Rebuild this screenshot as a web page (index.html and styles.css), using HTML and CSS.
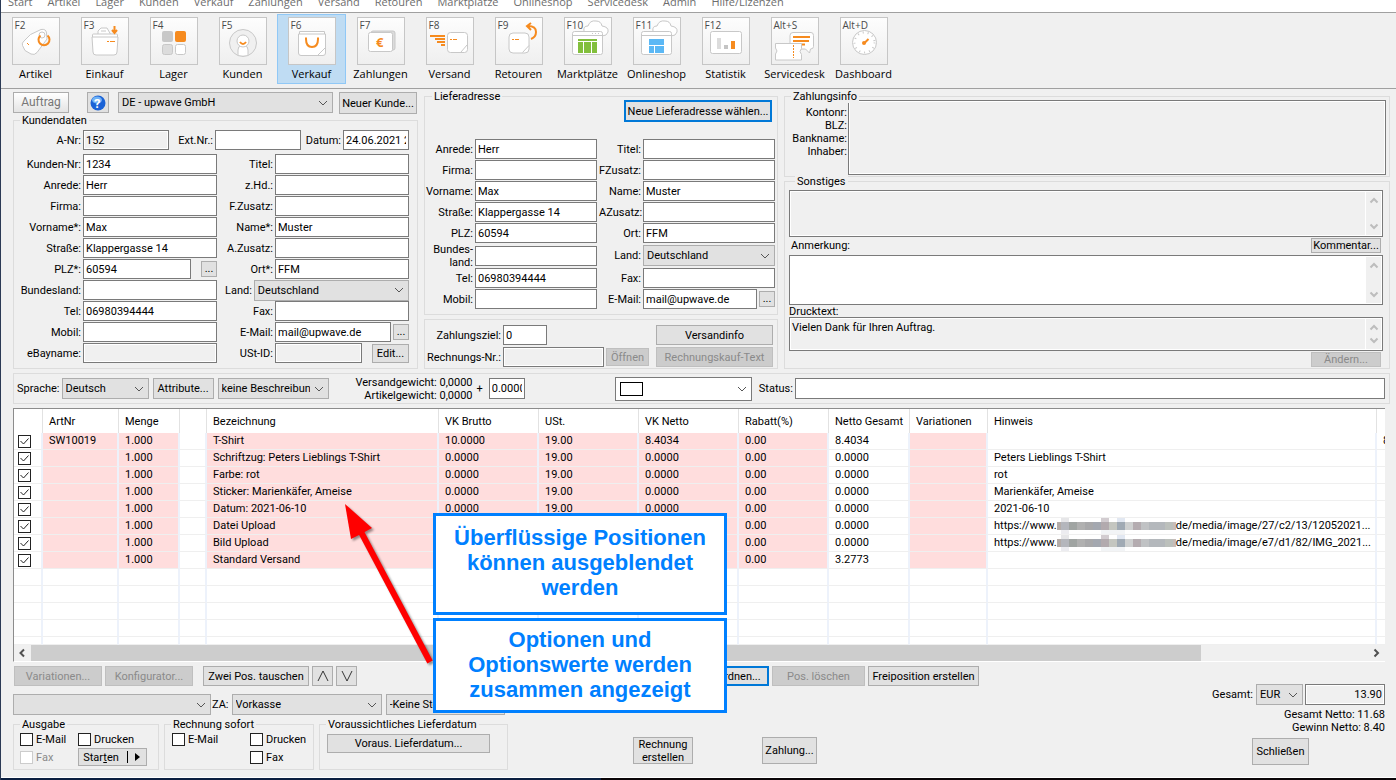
FILE: index.html
```html
<!DOCTYPE html>
<html lang="de">
<head>
    <meta charset="UTF-8">
    <meta name="viewport" content="width=device-width, initial-scale=1.0">
    <title>Auftrag</title>
    <link rel="stylesheet" href="styles.css">
</head>
<body>
    <!-- Menu -->
    <nav class="menu">
        <a href="#">Start</a>
        <a href="#">Artikel</a>
        <a href="#">Lager</a>
        <a href="#">Kunden</a>
        <a href="#">Verkauf</a>
        <a href="#">Zahlungen</a>
        <a href="#">Versand</a>
        <a href="#">Retouren</a>
        <a href="#">Marktplätze</a>
        <a href="#">Onlineshop</a>
        <a href="#">Servicedesk</a>
        <a href="#">Admin</a>
        <a href="#">Hilfe/Lizenzen</a>
    </nav>

    <!-- Toolbar -->
    <div class="toolbar">
        <button type="button" class="tool">
            <span class="tool-icon"><kbd>F2</kbd>
                <svg viewBox="0 0 48 48"><path class="line" d="M10.500 28.500Q9.500 26 12 24L18.500 17.500 29 12.500Q34 11.500 34.500 16L35 22 25 35.500Q22.500 38.500 19 37L13 33.500Z"/><circle class="line" cx="30" cy="18" r="3"/><path class="orange-line" stroke-width="2" d="M28.500 18.500A5.500 5.500 0 1 0 35.500 18.500"/><path class="orange-line" d="M15 26l2 2"/></svg>
            </span>
            Artikel
        </button>
        <button type="button" class="tool">
            <span class="tool-icon"><kbd>F3</kbd>
                <svg viewBox="0 0 48 48"><path class="line" d="M17 18V14l3-3h6l4 7M20 14h5"/><path class="line" d="M11.500 20V18q0-1 1-1h23q1 0 1 1v2"/><path class="line" d="M11 20h26l-1 15q0 3-3 3H15q-3 0-3-3Z"/><path class="orange-line" stroke-width="2" d="M33.500 9v6M31 13l2.500 3 2.500-3"/><path class="orange-line" d="M26 24.500h2M29 24.500h5"/></svg>
            </span>
            Einkauf
        </button>
        <button type="button" class="tool">
            <span class="tool-icon"><kbd>F4</kbd>
                <svg viewBox="0 0 48 48"><rect x="12" y="14" width="11" height="11" rx="2" fill="#c8c8c8"/><rect x="25" y="14" width="11" height="11" rx="2" fill="#f68b1f"/><rect class="line gray" x="12.500" y="27.500" width="10" height="10" rx="2"/><rect class="line" x="25.500" y="27.500" width="10" height="10" rx="2"/></svg>
            </span>
            Lager
        </button>
        <button type="button" class="tool">
            <span class="tool-icon"><kbd>F5</kbd>
                <svg viewBox="0 0 48 48"><circle class="line light" cx="24" cy="26" r="13.500"/><path class="line" d="M19 38v-5q0-4 3-4h4q3 0 3 4v5"/><circle class="line" cx="24" cy="24" r="6"/><path class="orange-line" stroke-width="2" d="M21 25q3 4 6 0"/></svg>
            </span>
            Kunden
        </button>
        <button type="button" class="tool active">
            <span class="tool-icon"><kbd>F6</kbd>
                <svg viewBox="0 0 48 48"><path class="line" d="M11.500 17v-2.500h25V17"/><path class="line" d="M10.500 17h27v19q0 2.500-2.500 2.500H13q-2.500 0-2.500-2.500Z"/><path class="line" d="M29.500 38.500l8-8"/><path class="orange-line" stroke-width="2" d="M17 21.500h2M29 21.500h2M18 22q0 8 6 8t6-8"/></svg>
            </span>
            Verkauf
        </button>
        <button type="button" class="tool">
            <span class="tool-icon"><kbd>F7</kbd>
                <svg viewBox="0 0 48 48"><rect class="line gray" x="14" y="14" width="24" height="19" rx="2"/><rect class="line" x="11.500" y="15.500" width="24" height="19" rx="2"/><text x="19" y="30" class="euro">€</text></svg>
            </span>
            Zahlungen
        </button>
        <button type="button" class="tool">
            <span class="tool-icon"><kbd>F8</kbd>
                <svg viewBox="0 0 48 48"><rect class="line" x="21.500" y="15.500" width="20" height="20" rx="3"/><path class="line" d="M35 35l6-7"/><path class="orange-line" stroke-width="2" d="M4 19h15M9 22h10M11 25h8M15 28h4"/><path class="orange-line" d="M24 22.500h2M27 22.500h4"/></svg>
            </span>
            Versand
        </button>
        <button type="button" class="tool">
            <span class="tool-icon"><kbd>F9</kbd>
                <svg viewBox="0 0 48 48"><rect class="line" x="14" y="16" width="20" height="20" rx="4"/><path class="line" d="M27.500 35.500l6.500-7"/><path class="orange-line" stroke-width="2" d="M36 22q5-2 5-7 0-6-8-6M36 6l-4 3 4 4"/><path class="orange-line" d="M17 22.500h2M20 22.500h4"/></svg>
            </span>
            Retouren
        </button>
        <button type="button" class="tool">
            <span class="tool-icon"><kbd>F10</kbd>
                <svg viewBox="0 0 48 48"><path class="line" d="M20 14q-1-5 4-5 2-6 8-5 5 0 6 5 7 1 6 6-1 4-6 4"/><rect class="line" x="8.500" y="14.500" width="30" height="23" rx="2"/><path class="line" d="M9 18.500h29M28 16.500h1M31 16.500h1M34 16.500h1"/><rect x="14" y="22" width="19" height="14" fill="#82bf3c"/><path stroke="#fff" fill="none" d="M14 24.500h19M19.500 25v11M27.500 25v11"/></svg>
            </span>
            Marktplätze
        </button>
        <button type="button" class="tool">
            <span class="tool-icon"><kbd>F11</kbd>
                <svg viewBox="0 0 48 48"><path class="line" d="M20 14q-1-5 4-5 2-6 8-5 5 0 6 5 7 1 6 6-1 4-6 4"/><rect class="line" x="8.500" y="14.500" width="30" height="23" rx="2"/><path class="line" d="M9 18.500h29"/><rect x="16" y="22" width="15" height="14" fill="#5bb8f5"/><path stroke="#fff" fill="none" d="M16 28.500h15M21.500 29v7"/></svg>
            </span>
            Onlineshop
        </button>
        <button type="button" class="tool">
            <span class="tool-icon"><kbd>F12</kbd>
                <svg viewBox="0 0 48 48"><rect class="line" x="8.500" y="14.500" width="31" height="22" rx="2"/><rect x="15" y="21" width="4" height="11" fill="#dcdcdc"/><rect x="22" y="28" width="4" height="4" fill="#c4c4c4"/><rect x="29" y="24" width="4" height="8" fill="#f68b1f"/></svg>
            </span>
            Statistik
        </button>
        <button type="button" class="tool">
            <span class="tool-icon"><kbd>Alt+S</kbd>
                <svg viewBox="0 0 48 48"><path class="line" d="M22 15.500h18q2.500 0 2.500 3v11q0 2.500-3 2.500l-1 4-4-4H22q-3 0-3-2.500v-11q0-3 3-3Z"/><path class="orange-line" stroke-width="2" d="M22 20h17M22 24h16M28 27.500h6"/><path class="line" d="M4.500 26.500h26v5q-3 3 0 6v5.500h-26V37q3-3 0-6Z"/><path class="orange-line" stroke-dasharray="2 1" d="M22.500 28v13"/></svg>
            </span>
            Servicedesk
        </button>
        <button type="button" class="tool">
            <span class="tool-icon"><kbd>Alt+D</kbd>
                <svg viewBox="0 0 48 48"><circle class="line" cx="24.500" cy="25.500" r="12"/><circle cx="24.500" cy="25.500" r="10" fill="none" stroke="#c8c8c8" stroke-width="2" stroke-dasharray="1 4"/><path class="orange-line" stroke-width="2" d="M24.500 26l4-4"/><circle cx="24" cy="26" r="2" fill="#f68b1f"/></svg>
            </span>
            Dashboard
        </button>
    </div>

    <main class="order">
        <div class="top">
            <!-- Customer -->
            <div class="col-customer">
                <div class="head-row">
                    <button type="button" class="btn order-btn">Auftrag</button>
                    <button type="button" class="btn help-btn" aria-label="Hilfe">
                        <svg viewBox="0 0 16 16" width="16" height="16"><circle cx="8" cy="8" r="7.500" fill="#1a62d6"/><ellipse cx="7" cy="5" rx="5" ry="3.500" fill="#6fb2f7"/><text x="4" y="13" class="help-mark">?</text></svg>
                    </button>
                    <select class="select company" aria-label="Firma"><option>DE - upwave GmbH</option></select>
                    <button type="button" class="btn new-customer">Neuer Kunde...</button>
                </div>
                <fieldset class="group customer">
                    <legend>Kundendaten</legend>
                    <div class="number-row">
                        <label for="anr">A-Nr:</label>
                        <input type="text" id="anr" value="152" readonly>
                        <label for="extnr">Ext.Nr.:</label>
                        <input type="text" id="extnr">
                        <label for="datum">Datum:</label>
                        <input type="text" id="datum" value="24.06.2021 22:10">
                    </div>
                    <div class="fields">
                        <label for="kdnr">Kunden-Nr:</label>
                        <input type="text" id="kdnr" value="1234">
                        <label for="titel">Titel:</label>
                        <input type="text" id="titel">

                        <label for="anrede">Anrede:</label>
                        <input type="text" id="anrede" value="Herr">
                        <label for="zhd">z.Hd.:</label>
                        <input type="text" id="zhd">

                        <label for="firma">Firma:</label>
                        <input type="text" id="firma">
                        <label for="fzusatz">F.Zusatz:</label>
                        <input type="text" id="fzusatz">

                        <label for="vorname">Vorname*:</label>
                        <input type="text" id="vorname" value="Max">
                        <label for="name">Name*:</label>
                        <input type="text" id="name" value="Muster">

                        <label for="strasse">Straße:</label>
                        <input type="text" id="strasse" value="Klappergasse 14">
                        <label for="azusatz">A.Zusatz:</label>
                        <input type="text" id="azusatz">

                        <label for="plz">PLZ*:</label>
                        <div class="with-btn wide-gap">
                            <input type="text" id="plz" value="60594">
                            <button type="button" class="btn dots">...</button>
                        </div>
                        <label for="ort">Ort*:</label>
                        <input type="text" id="ort" value="FFM">

                        <label for="bundesland">Bundesland:</label>
                        <input type="text" id="bundesland">
                        <div class="country">
                            <label for="land">Land:</label>
                            <select class="select" id="land"><option>Deutschland</option></select>
                        </div>

                        <label for="tel">Tel:</label>
                        <input type="text" id="tel" value="06980394444">
                        <label for="fax">Fax:</label>
                        <input type="text" id="fax">

                        <label for="mobil">Mobil:</label>
                        <input type="text" id="mobil">
                        <label for="email">E-Mail:</label>
                        <div class="with-btn">
                            <input type="text" id="email" value="mail@upwave.de">
                            <button type="button" class="btn dots">...</button>
                        </div>

                        <label for="ebay">eBayname:</label>
                        <input type="text" id="ebay" readonly>
                        <label for="ustid">USt-ID:</label>
                        <div class="with-btn wide-gap">
                            <input type="text" id="ustid" readonly>
                            <button type="button" class="btn edit-btn">Edit...</button>
                        </div>
                    </div>
                </fieldset>
            </div>

            <!-- Delivery address -->
            <div class="col-delivery">
                <fieldset class="group delivery">
                    <legend>Lieferadresse</legend>
                    <div class="group-body">
                        <button type="button" class="btn focus new-address">Neue Lieferadresse wählen...</button>
                        <div class="fields">
                            <label for="l-anrede">Anrede:</label>
                            <input type="text" id="l-anrede" value="Herr">
                            <label for="l-titel">Titel:</label>
                            <input type="text" id="l-titel">

                            <label for="l-firma">Firma:</label>
                            <input type="text" id="l-firma">
                            <label for="l-fzusatz">FZusatz:</label>
                            <input type="text" id="l-fzusatz">

                            <label for="l-vorname">Vorname:</label>
                            <input type="text" id="l-vorname" value="Max">
                            <label for="l-name">Name:</label>
                            <input type="text" id="l-name" value="Muster">

                            <label for="l-strasse">Straße:</label>
                            <input type="text" id="l-strasse" value="Klappergasse 14">
                            <label for="l-azusatz">AZusatz:</label>
                            <input type="text" id="l-azusatz">

                            <label for="l-plz">PLZ:</label>
                            <input type="text" id="l-plz" value="60594">
                            <label for="l-ort">Ort:</label>
                            <input type="text" id="l-ort" value="FFM">

                            <label for="l-bundesland">Bundes-<br>land:</label>
                            <input type="text" id="l-bundesland">
                            <label for="l-land">Land:</label>
                            <select class="select" id="l-land"><option>Deutschland</option></select>

                            <label for="l-tel">Tel:</label>
                            <input type="text" id="l-tel" value="06980394444">
                            <label for="l-fax">Fax:</label>
                            <input type="text" id="l-fax">

                            <label for="l-mobil">Mobil:</label>
                            <input type="text" id="l-mobil">
                            <label for="l-email">E-Mail:</label>
                            <div class="with-btn">
                                <input type="text" id="l-email" value="mail@upwave.de">
                                <button type="button" class="btn dots">...</button>
                            </div>
                        </div>
                    </div>
                </fieldset>
                <div class="payment-box">
                    <label for="ziel">Zahlungsziel:</label>
                    <div><input type="text" id="ziel" class="ziel" value="0"></div>
                    <button type="button" class="btn">Versandinfo</button>
                    <label for="rnr">Rechnungs-Nr.:</label>
                    <div class="with-btn">
                        <input type="text" id="rnr" readonly>
                        <button type="button" class="btn open-btn" disabled>Öffnen</button>
                    </div>
                    <button type="button" class="btn" disabled>Rechnungskauf-Text</button>
                </div>
            </div>

            <!-- Payment info and notes -->
            <div class="col-notes">
                <fieldset class="group">
                    <legend>Zahlungsinfo</legend>
                    <div class="group-body payinfo">
                        <label for="payinfo">Kontonr:<br>BLZ:<br>Bankname:<br>Inhaber:</label>
                        <textarea id="payinfo" class="area" readonly></textarea>
                    </div>
                </fieldset>
                <fieldset class="group notes">
                    <legend>Sonstiges</legend>
                    <div class="memo readonly">
                        <textarea aria-label="Sonstiges" rows="2" readonly></textarea>
                        <div class="scroll">
                            <svg viewBox="0 0 10 7"><path d="M1.500 5.500L5 2l3.500 3.500"/></svg>
                            <svg viewBox="0 0 10 7"><path d="M1.500 1.500L5 5l3.500-3.500"/></svg>
                        </div>
                    </div>
                    <div class="note-row">
                        <label for="anmerkung">Anmerkung:</label>
                        <button type="button" class="btn small">Kommentar...</button>
                    </div>
                    <div class="memo">
                        <textarea id="anmerkung" rows="3"></textarea>
                        <div class="scroll">
                            <svg viewBox="0 0 10 7"><path d="M1.500 5.500L5 2l3.500 3.500"/></svg>
                            <svg viewBox="0 0 10 7"><path d="M1.500 1.500L5 5l3.500-3.500"/></svg>
                        </div>
                    </div>
                    <label for="drucktext" class="print-label">Drucktext:</label>
                    <div class="memo readonly short">
                        <textarea id="drucktext" rows="2" readonly>Vielen Dank für Ihren Auftrag.</textarea>
                        <div class="scroll">
                            <svg viewBox="0 0 10 7"><path d="M1.500 5.500L5 2l3.500 3.500"/></svg>
                            <svg viewBox="0 0 10 7"><path d="M1.500 1.500L5 5l3.500-3.500"/></svg>
                        </div>
                    </div>
                    <div class="note-row end">
                        <button type="button" class="btn small" disabled>Ändern...</button>
                    </div>
                </fieldset>
            </div>
        </div>

        <!-- Language, weight, status -->
        <div class="strip">
            <label for="sprache">Sprache:</label>
            <select class="select language" id="sprache"><option>Deutsch</option></select>
            <button type="button" class="btn attributes">Attribute...</button>
            <select class="select description" aria-label="Beschreibung"><option>keine Beschreibun</option></select>
            <label for="gewicht" class="weights">Versandgewicht: 0,0000<br>Artikelgewicht: 0,0000</label>
            <span class="plus">+</span>
            <input type="text" id="gewicht" class="weight" value="0.0000">
            <div class="color-pick">
                <select class="select" id="farbe" aria-label="Farbe"><option></option></select>
                <span class="swatch"></span>
            </div>
            <label for="status">Status:</label>
            <input type="text" id="status" class="status">
        </div>

        <!-- Positions -->
        <div class="positions">
            <table>
                <colgroup>
                    <col class="c-check"><col class="c-nr"><col class="c-amount"><col class="c-empty"><col class="c-name">
                    <col class="c-price"><col class="c-price"><col class="c-price"><col class="c-discount"><col class="c-total">
                    <col class="c-var"><col><col class="c-last">
                </colgroup>
                <thead>
                    <tr><th></th><th>ArtNr</th><th>Menge</th><th></th><th>Bezeichnung</th><th>VK Brutto</th><th>USt.</th><th>VK Netto</th><th>Rabatt(%)</th><th>Netto Gesamt</th><th>Variationen</th><th>Hinweis</th><th></th></tr>
                </thead>
                <tbody>
                    <tr><td><input type="checkbox" aria-label="Position 1" checked></td><td class="edit">SW10019</td><td class="edit">1.000</td><td></td><td class="edit">T-Shirt</td><td class="edit">10.0000</td><td class="edit">19.00</td><td class="edit">8.4034</td><td class="edit">0.00</td><td>8.4034</td><td class="edit"></td><td></td><td>8</td></tr>
                    <tr><td><input type="checkbox" aria-label="Position 2" checked></td><td class="edit"></td><td class="edit">1.000</td><td></td><td class="edit">Schriftzug: Peters Lieblings T-Shirt</td><td class="edit">0.0000</td><td class="edit">19.00</td><td class="edit">0.0000</td><td class="edit">0.00</td><td>0.0000</td><td class="edit"></td><td>Peters Lieblings T-Shirt</td><td></td></tr>
                    <tr><td><input type="checkbox" aria-label="Position 3" checked></td><td class="edit"></td><td class="edit">1.000</td><td></td><td class="edit">Farbe: rot</td><td class="edit">0.0000</td><td class="edit">19.00</td><td class="edit">0.0000</td><td class="edit">0.00</td><td>0.0000</td><td class="edit"></td><td>rot</td><td></td></tr>
                    <tr><td><input type="checkbox" aria-label="Position 4" checked></td><td class="edit"></td><td class="edit">1.000</td><td></td><td class="edit">Sticker: Marienkäfer, Ameise</td><td class="edit">0.0000</td><td class="edit">19.00</td><td class="edit">0.0000</td><td class="edit">0.00</td><td>0.0000</td><td class="edit"></td><td>Marienkäfer, Ameise</td><td></td></tr>
                    <tr><td><input type="checkbox" aria-label="Position 5" checked></td><td class="edit"></td><td class="edit">1.000</td><td></td><td class="edit">Datum: 2021-06-10</td><td class="edit">0.0000</td><td class="edit">19.00</td><td class="edit">0.0000</td><td class="edit">0.00</td><td>0.0000</td><td class="edit"></td><td>2021-06-10</td><td></td></tr>
                    <tr><td><input type="checkbox" aria-label="Position 6" checked></td><td class="edit"></td><td class="edit">1.000</td><td></td><td class="edit">Datei Upload</td><td class="edit">0.0000</td><td class="edit">19.00</td><td class="edit">0.0000</td><td class="edit">0.00</td><td>0.0000</td><td class="edit"></td><td>https://www.<svg class="mosaic" viewBox="0 0 119 16"><use href="#mosaic-cells"/></svg>de/media/image/27/c2/13/12052021...</td><td></td></tr>
                    <tr><td><input type="checkbox" aria-label="Position 7" checked></td><td class="edit"></td><td class="edit">1.000</td><td></td><td class="edit">Bild Upload</td><td class="edit">0.0000</td><td class="edit">19.00</td><td class="edit">0.0000</td><td class="edit">0.00</td><td>0.0000</td><td class="edit"></td><td>https://www.<svg class="mosaic" viewBox="0 0 119 16"><use href="#mosaic-cells"/></svg>de/media/image/e7/d1/82/IMG_2021...</td><td></td></tr>
                    <tr><td><input type="checkbox" aria-label="Position 8" checked></td><td class="edit"></td><td class="edit">1.000</td><td></td><td class="edit">Standard Versand</td><td class="edit">0.0000</td><td class="edit">19.00</td><td class="edit">0.0000</td><td class="edit">0.00</td><td>3.2773</td><td class="edit"></td><td></td><td></td></tr>
                    <tr><td></td><td></td><td></td><td></td><td></td><td></td><td></td><td></td><td></td><td></td><td></td><td></td><td></td></tr>
                    <tr><td></td><td></td><td></td><td></td><td></td><td></td><td></td><td></td><td></td><td></td><td></td><td></td><td></td></tr>
                    <tr><td></td><td></td><td></td><td></td><td></td><td></td><td></td><td></td><td></td><td></td><td></td><td></td><td></td></tr>
                    <tr><td></td><td></td><td></td><td></td><td></td><td></td><td></td><td></td><td></td><td></td><td></td><td></td><td></td></tr>
                    <tr class="cut"><td></td><td></td><td></td><td></td><td></td><td></td><td></td><td></td><td></td><td></td><td></td><td></td><td></td></tr>
                </tbody>
            </table>
            <div class="hscroll">
                <svg viewBox="0 0 17 16"><path d="M10 4.500L6.500 8l3.500 3.500"/></svg>
                <div class="hscroll-track"><div class="hscroll-thumb"></div></div>
                <svg viewBox="0 0 17 16"><path d="M6.500 4.500L10 8l-3.500 3.500"/></svg>
            </div>
        </div>

        <!-- Actions -->
        <div class="bottom">
            <div class="bottom-left">
                <div class="actions">
                    <button type="button" class="btn variant" disabled>Variationen...</button>
                    <button type="button" class="btn variant" disabled>Konfigurator...</button>
                    <button type="button" class="btn swap">Zwei Pos. tauschen</button>
                    <button type="button" class="btn move" aria-label="Nach oben"><svg viewBox="0 0 12 12"><path d="M1 11L6 1l5 10"/></svg></button>
                    <button type="button" class="btn move" aria-label="Nach unten"><svg viewBox="0 0 12 12"><path d="M1 1l5 10 5-10"/></svg></button>
                    <button type="button" class="btn focus assign">Zuordnen...</button>
                    <button type="button" class="btn delete" disabled>Pos. löschen</button>
                    <button type="button" class="btn free">Freiposition erstellen</button>
                </div>
                <div class="pay-row">
                    <select class="select shipping" aria-label="Versandart"><option></option></select>
                    <label for="za">ZA:</label>
                    <select class="select payment" id="za"><option>Vorkasse</option></select>
                    <select class="select tax" aria-label="Steuer"><option>-Keine Steuer-</option></select>
                </div>
                <div class="output-row">
                    <fieldset class="group output">
                        <legend>Ausgabe</legend>
                        <div class="checks">
                            <label><input type="checkbox">E-Mail</label>
                            <label><input type="checkbox">Drucken</label>
                            <label class="off"><input type="checkbox" disabled>Fax</label>
                            <button type="button" class="btn start"><span>Star<u>t</u>en</span><svg viewBox="0 0 16 12"><path d="M1.500 0v12"/><path class="fill" d="M9 2v8l5-4Z"/></svg></button>
                        </div>
                    </fieldset>
                    <fieldset class="group invoice">
                        <legend>Rechnung sofort</legend>
                        <div class="checks">
                            <label><input type="checkbox">E-Mail</label>
                            <label><input type="checkbox">Drucken</label>
                            <label class="second"><input type="checkbox">Fax</label>
                        </div>
                    </fieldset>
                    <fieldset class="group date">
                        <legend>Voraussichtliches Lieferdatum</legend>
                        <button type="button" class="btn date-btn">Voraus. Lieferdatum...</button>
                    </fieldset>
                    <button type="button" class="btn tall create">Rechnung erstellen</button>
                    <button type="button" class="btn tall pay">Zahlung...</button>
                </div>
            </div>
            <div class="bottom-right">
                <div class="total">
                    <label for="gesamt">Gesamt:</label>
                    <select class="select currency" aria-label="Währung"><option>EUR</option></select>
                    <input type="text" id="gesamt" value="13.90" readonly>
                </div>
                <p>Gesamt Netto: 11.68<br>Gewinn Netto: 8.40</p>
                <button type="button" class="btn tall close">Schließen</button>
            </div>
        </div>
    </main>
    <footer class="taskbar"></footer>

    <!-- Annotations -->
    <div class="callout callout-top">Überflüssige Positionen<br>können ausgeblendet<br>werden</div>
    <div class="callout callout-bottom">Optionen und<br>Optionswerte werden<br>zusammen angezeigt</div>
    <svg class="arrow" viewBox="0 0 110 180"><path d="M100 170L31 40" stroke="#f00" stroke-width="6"/><path d="M15 12L21 47 31 42 42 36Z" fill="#f00"/></svg>

    <svg class="defs" width="0" height="0">
        <g id="mosaic-cells">
            <rect x="4" width="8" height="4" fill="#e6e6e8"/><rect x="44" width="8" height="4" fill="#d2ccd0"/><rect x="60" width="8" height="4" fill="#e2e8f2"/>
            <rect y="4" width="4" height="8" fill="#b4aca8"/><rect x="4" y="4" width="8" height="8" fill="#b4b6bc"/><rect x="12" y="4" width="8" height="8" fill="#a0a4a2"/><rect x="20" y="4" width="8" height="8" fill="#b0b0b0"/><rect x="28" y="4" width="8" height="8" fill="#a8a8aa"/><rect x="36" y="4" width="8" height="8" fill="#a4a8b0"/><rect x="44" y="4" width="8" height="8" fill="#b2aaae"/><rect x="52" y="4" width="8" height="8" fill="#c4c6c0"/><rect x="60" y="4" width="8" height="8" fill="#a0aab4"/><rect x="68" y="4" width="8" height="8" fill="#ced0d0"/><rect x="76" y="4" width="8" height="8" fill="#b4acb0"/><rect x="84" y="4" width="8" height="8" fill="#c0c2c4"/><rect x="92" y="4" width="16" height="8" fill="#b4b8bc"/><rect x="108" y="4" width="8" height="8" fill="#bcc0bc"/><rect x="116" y="4" width="3" height="8" fill="#c8bcb8"/>
            <rect x="4" y="12" width="8" height="4" fill="#ececf0"/><rect x="44" y="12" width="24" height="4" fill="#f2f4f6"/>
        </g>
    </svg>
</body>
</html>
```
FILE: styles.css
```css
* {
    margin: 0;
    padding: 0;
    box-sizing: border-box;
}

body {
    min-height: 100vh;
    display: flex;
    flex-direction: column;
    position: relative;
    border-left: 1px solid #2b3a55;
    background: #f0f0f0;
    color: #000;
    font-family: Roboto, "Liberation Sans", Arial, sans-serif;
    font-size: 11px;
    line-height: 13px;
}

button, input, select, textarea {
    font: inherit;
    color: inherit;
    border-radius: 0;
}

/* Menu */
.menu {
    display: flex;
    align-items: flex-end;
    gap: 15px;
    height: 13px;
    padding: 0 7px 2px;
    overflow: hidden;
    background: #fff;
    border-bottom: 1px solid #a0a0a0;
    font-family: "Open Sans", sans-serif;
    line-height: 16px;
}

.menu a {
    color: #6d6d6d;
    text-decoration: none;
}

/* Toolbar */
.toolbar {
    display: flex;
    height: 76px;
    padding-top: 1px;
    border-bottom: 1px solid #a0a0a0;
}

.tool {
    display: flex;
    flex-direction: column;
    align-items: center;
    gap: 1px;
    width: 69px;
    height: 70px;
    padding-top: 2px;
    border: 1px solid transparent;
    background: none;
    white-space: nowrap;
    font-family: "Open Sans", sans-serif;
    line-height: 16px;
}

.tool.active {
    background: #bfdcf3;
    border-color: #90c8f6;
}

.tool-icon {
    position: relative;
    width: 48px;
    height: 48px;
    border: 1px solid #c6c6c6;
    background: linear-gradient(#fdfdfd, #efefef);
}

.tool-icon svg {
    display: block;
    width: 48px;
    height: 48px;
    margin: -1px;
}

.tool-icon kbd {
    position: absolute;
    left: 2px;
    top: 0;
    color: #4a4a4a;
    font-family: "Open Sans", sans-serif;
    font-size: 10px;
    line-height: 14px;
}

.line {
    fill: #fff;
    stroke: #c8c8c8;
}

.line.gray {
    fill: #dcdcdc;
}

.line.light {
    fill: #f0f0f0;
}

.orange-line {
    fill: none;
    stroke: #f68b1f;
}

.euro {
    fill: #f68b1f;
    font-size: 13px;
    font-weight: bold;
}

/* Controls */
.btn {
    height: 20px;
    border: 1px solid #adadad;
    background: #e1e1e1;
    text-align: center;
    white-space: nowrap;
}

.btn:disabled {
    background: #ccc;
    border-color: #bfbfbf;
    color: #8a8a8a;
}

.btn.focus {
    border: 2px solid #0078d7;
}

input[type="text"] {
    width: 100%;
    min-width: 0;
    height: 20px;
    padding: 0 2px;
    border: 1px solid #7a7a7a;
    background: #fff;
}

input[type="text"]:read-only {
    background: #f0f0f0;
    box-shadow: inset 0 0 0 1px #fff;
}

.select {
    width: 100%;
    height: 21px;
    padding: 0 18px 0 3px;
    border: 1px solid #adadad;
    background: #e1e1e1 url("data:image/svg+xml,%3Csvg xmlns='http://www.w3.org/2000/svg' width='10' height='6'%3E%3Cpath d='M1 1l4 4 4-4' fill='none' stroke='%23555'/%3E%3C/svg%3E") no-repeat right 4px center;
    appearance: none;
}

input[type="checkbox"] {
    width: 13px;
    height: 13px;
    flex: none;
    border: 1px solid #222;
    background: #fff;
    appearance: none;
}

input[type="checkbox"]:checked {
    background: #fff url("data:image/svg+xml,%3Csvg xmlns='http://www.w3.org/2000/svg' width='11' height='11'%3E%3Cpath d='M1.500 5l3 3L9.500 2.500' fill='none' stroke='%23222'/%3E%3C/svg%3E") no-repeat center;
}

input[type="checkbox"]:disabled {
    border-color: #ccc;
}

.group {
    min-width: 0;
    border: 1px solid #dcdcdc;
}

.group legend {
    position: relative;
    margin-left: 6px;
    padding: 0 2px;
    background: #f0f0f0;
}

.group-body {
    margin-top: -3px;
}

/* Order form */
.order {
    flex: 1;
    padding: 0 6px 0 12px;
    border-bottom: 1px solid #fff;
}

.top {
    display: grid;
    grid-template-columns: 405px 354px 1fr;
    column-gap: 6px;
}

.col-customer {
    padding-top: 3px;
}

.col-delivery,
.col-notes {
    padding-top: 1px;
}

.head-row {
    display: flex;
    align-items: flex-start;
    padding-right: 1px;
}

.order-btn {
    width: 56px;
    height: 21px;
    margin-right: 18px;
    background: linear-gradient(#fff, #e4e4e4);
    color: #777;
    font-size: 12px;
}

.help-btn {
    width: 22px;
    height: 21px;
    margin-right: 9px;
}

.help-btn svg {
    display: block;
    margin: auto;
}

.help-mark {
    fill: #fff;
    font-size: 13px;
    font-weight: bold;
}

.company {
    flex: 1;
    margin-right: 6px;
}

.new-customer {
    width: 78px;
    height: 22px;
}

.customer {
    padding: 3px 8px 5px 0;
}

.number-row {
    display: grid;
    grid-template-columns: 67px 86px 42px 86px 38px 66px;
    gap: 2px;
    align-items: center;
    margin-bottom: 4px;
}

.number-row label,
.fields > label,
.payment-box label {
    text-align: right;
    white-space: nowrap;
}

.fields {
    display: grid;
    gap: 1px 2px;
    align-items: center;
}

.customer .fields {
    grid-template-columns: 67px 134px 54px 134px;
    grid-auto-rows: 20px;
}

.country {
    grid-column: span 2;
    display: flex;
    align-items: center;
    gap: 2px;
    padding-left: 6px;
}

.country .select {
    flex: 1;
}

.with-btn {
    display: flex;
    align-items: center;
    gap: 2px;
}

.with-btn.wide-gap {
    gap: 10px;
}

.dots {
    flex: none;
    width: 16px;
    height: 16px;
    line-height: 10px;
}

.edit-btn {
    flex: none;
    width: 37px;
    height: 19px;
}

.delivery {
    padding: 0 2px 5px 1px;
}

.new-address {
    display: block;
    width: 148px;
    height: 22px;
    margin: 0 3px 17px auto;
}

.delivery .fields {
    grid-template-columns: 47px 122px 42px 1fr;
    grid-template-rows: repeat(5, 20px) 23px 20px 20px;
}

.payment-box {
    display: grid;
    grid-template-columns: 75px 151px 1fr;
    gap: 2px;
    align-items: center;
    margin-top: 4px;
    padding: 5px 4px 1px 1px;
    border: 1px solid #dcdcdc;
}

.payment-box .with-btn {
    width: 146px;
}

.payment-box .ziel {
    width: 44px;
}

.open-btn {
    flex: none;
    width: 43px;
    height: 18px;
}

.payinfo {
    display: flex;
    gap: 1px;
    padding: 0 3px 1px 0;
}

.payinfo label {
    width: 62px;
    padding-top: 6px;
    text-align: right;
}

.area {
    flex: 1;
    height: 75px;
    border: 1px solid #7a7a7a;
    background: #f0f0f0;
    box-shadow: inset 0 0 0 1px #fff;
    resize: none;
}

.notes {
    margin-top: -2px;
    padding: 2px 6px 1px 4px;
}

.memo {
    display: flex;
    height: 50px;
    border: 1px solid #7a7a7a;
    background: #fff;
}

.memo.readonly {
    height: 47px;
    background: #f0f0f0;
    box-shadow: inset 0 0 0 1px #fff;
}

.memo.short {
    height: 34px;
}

.memo textarea {
    flex: 1;
    padding: 3px 2px;
    border: none;
    background: transparent;
    resize: none;
    overflow: hidden;
}

.scroll {
    display: flex;
    flex-direction: column;
    justify-content: space-between;
    align-items: center;
    width: 16px;
    margin: 1px;
    padding: 5px 0;
    border-left: 1px solid #fff;
    background: #f0f0f0;
}

.scroll svg {
    width: 10px;
    height: 7px;
    fill: none;
    stroke: #bdbdbd;
    stroke-width: 2;
}

.note-row {
    display: flex;
    justify-content: space-between;
    align-items: center;
    margin: 1px 2px 2px;
}

.note-row.end {
    justify-content: flex-end;
    margin-bottom: 0;
}

.btn.small {
    width: 70px;
    height: 15px;
    line-height: 12px;
}

.print-label {
    display: block;
    height: 12px;
}

/* Language strip */
.strip {
    display: flex;
    align-items: center;
    height: 31px;
    margin: 4px 0;
    padding: 0 4px 0 3px;
    border: 1px solid #dcdcdc;
}

.language {
    width: 87px;
    margin-left: 2px;
}

.attributes {
    width: 61px;
    height: 21px;
    margin: 0 4px;
}

.description {
    width: 111px;
}

.weights {
    width: 144px;
    text-align: right;
}

.plus {
    margin: 0 6px 0 4px;
}

.strip .weight {
    width: 36px;
    height: 21px;
}

.color-pick {
    position: relative;
    width: 137px;
    margin: 0 7px 0 90px;
}

.color-pick .select {
    display: block;
    height: 24px;
    border-color: #7a7a7a;
    background-color: #fff;
}

.swatch {
    position: absolute;
    left: 5px;
    top: 5px;
    width: 23px;
    height: 14px;
    border: 1px solid #000;
    pointer-events: none;
}

.strip .status {
    flex: 1;
    height: 21px;
    margin-left: 2px;
}

/* Positions */
.positions {
    margin-right: 5px;
    border-top: 1px solid #8c8c8c;
    border-left: 1px solid #8c8c8c;
    border-bottom: 1px solid #fff;
    background: #fff;
}

table {
    width: 100%;
    table-layout: fixed;
    border-collapse: separate;
    border-spacing: 0;
}

.c-check { width: 29px; }
.c-nr { width: 76px; }
.c-amount { width: 61px; }
.c-empty { width: 27px; }
.c-name { width: 232px; }
.c-price { width: 100px; }
.c-discount { width: 90px; }
.c-total { width: 81px; }
.c-var { width: 78px; }
.c-last { width: 8px; }

th,
td {
    padding: 0 4px 0 6px;
    overflow: hidden;
    white-space: nowrap;
    text-align: left;
    font-weight: normal;
}

th {
    height: 24px;
    border-right: 1px solid #e2e2e2;
}

td {
    height: 17px;
    line-height: 16px;
    border-right: 2px solid #edf2fb;
    border-bottom: 1px solid #efefef;
}

td.edit {
    background: #fdd;
    background-clip: padding-box;
}

td:first-child {
    padding-left: 4px;
}

td input[type="checkbox"] {
    display: block;
}

th:last-child,
td:last-child {
    padding-right: 0;
    border-right: none;
}

.cut td {
    height: 8px;
}

.mosaic {
    width: 119px;
    height: 16px;
    vertical-align: top;
}

.hscroll {
    display: flex;
    height: 16px;
    background: #f0f0f0;
}

.hscroll svg {
    width: 17px;
    height: 16px;
    fill: none;
    stroke: #505050;
    stroke-width: 2;
}

.hscroll-track {
    flex: 1;
}

.hscroll-thumb {
    width: 87.5%;
    height: 16px;
    background: #cdcdcd;
}

/* Bottom */
.bottom {
    display: flex;
    justify-content: space-between;
    padding: 4px 5px 5px 0;
}

.actions,
.pay-row {
    display: flex;
    align-items: center;
}

.actions {
    gap: 3px;
    margin-left: 1px;
}

.variant {
    width: 88px;
}

.swap {
    width: 106px;
    margin-left: 7px;
}

.move {
    width: 21px;
}

.move svg {
    display: block;
    width: 12px;
    height: 12px;
    margin: auto;
    fill: none;
    stroke: #333;
}

.assign {
    width: 72px;
    margin-left: 337px;
}

.delete {
    width: 93px;
}

.free {
    width: 111px;
}

.pay-row {
    margin-top: 8px;
}

.shipping {
    width: 198px;
    margin-right: 1px;
}

.payment {
    width: 150px;
    margin: 0 4px 0 3px;
}

.tax {
    width: 119px;
}

.output-row {
    display: flex;
    align-items: stretch;
    gap: 5px;
    margin-top: 3px;
}

.output {
    width: 146px;
}

.invoice {
    width: 150px;
}

.date {
    width: 189px;
}

.checks {
    display: grid;
    grid-template-columns: 58px auto;
    gap: 2px 0;
    align-items: center;
    padding: 2px 5px 3px 6px;
}

.invoice .checks {
    grid-template-columns: 78px auto;
    gap: 5px 0;
    padding-left: 7px;
}

.invoice .second {
    grid-column: 2;
}

.checks label {
    display: flex;
    align-items: center;
    gap: 3px;
}

.checks .off {
    color: #8a8a8a;
}

.start {
    display: flex;
    align-items: center;
    justify-content: center;
    gap: 7px;
    width: 69px;
    height: 18px;
}

.start svg {
    flex: none;
    width: 16px;
    height: 12px;
    stroke: #000;
}

.start .fill {
    stroke: none;
    fill: #000;
}

.date-btn {
    display: block;
    width: 163px;
    height: 19px;
    margin: 3px 7px;
}

.tall {
    height: 27px;
    line-height: 13px;
}

.create {
    width: 60px;
    margin: 19px 0 0 120px;
    white-space: normal;
}

.pay {
    width: 55px;
    margin: 19px 0 0 64px;
}

.bottom-right {
    display: flex;
    flex-direction: column;
    align-items: flex-end;
    padding-top: 18px;
    text-align: right;
}

.total {
    display: flex;
    align-items: center;
}

.total .currency {
    width: 47px;
    margin: 0 2px 0 3px;
}

.total input[type="text"] {
    width: 80px;
    height: 21px;
    text-align: right;
}

.bottom-right p {
    margin: 3px 0 4px;
}

.close {
    width: 57px;
    margin-right: 76px;
}

.taskbar {
    height: 2px;
    background: linear-gradient(90deg, #0b1f40 0, #0b1f40 43%, #0a0508 43%);
}

/* Annotations */
.callout {
    position: absolute;
    left: 432px;
    width: 294px;
    border: 3px solid #0080ff;
    background: #fff;
    color: #0080ff;
    text-align: center;
    font-family: "Liberation Sans", Arial, sans-serif;
    font-size: 22px;
    font-weight: bold;
    line-height: 25px;
}

.callout-top {
    top: 513px;
    height: 102px;
    padding-top: 9px;
}

.callout-bottom {
    top: 618px;
    height: 95px;
    padding-top: 6px;
}

.arrow {
    position: absolute;
    left: 329px;
    top: 492px;
    width: 110px;
    height: 180px;
    clip-path: inset(0 7px 0 0);
    filter: drop-shadow(2px 2px 1px rgba(0, 0, 0, 0.4));
    pointer-events: none;
}

.defs {
    position: absolute;
}
```
